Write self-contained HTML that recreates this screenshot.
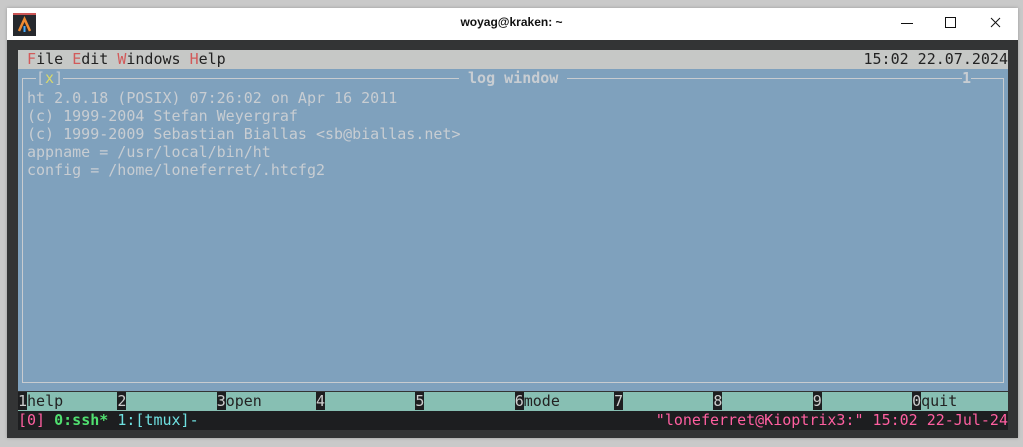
<!DOCTYPE html>
<html><head><meta charset="utf-8"><style>
body{margin:0;width:1023px;height:447px;background:#c9c9c9;position:relative;overflow:hidden;font-family:"DejaVu Sans Mono","Liberation Mono",monospace}
.win{position:absolute;left:7px;top:8px;width:1011px;height:430px;background:#333435;box-shadow:0 0 3px #999}
.tb{position:absolute;left:7px;top:8px;width:1011px;height:32px;background:#fff}
.title{position:absolute;left:0;width:1023px;top:15px;text-align:center;font:bold 12px "Liberation Sans",sans-serif;color:#111}
.row{position:absolute;left:18px;width:990px;height:19px;font-size:15px;line-height:19px;white-space:pre;letter-spacing:0}
.r{color:#d25a5a}
.t{position:absolute;font-size:15px;line-height:18px;white-space:pre;color:#c8cdd2}
</style></head><body>
<div class="win"></div>
<div class="tb"></div>
<div style="position:absolute;left:13px;top:13px;width:23px;height:21px;background:#26292e;border-top:2px solid #c55"></div>
<svg style="position:absolute;left:13px;top:14px" width="23" height="21"><path d="M6 17 L11.5 5 L17 17" stroke="#f08a30" stroke-width="2.5" fill="none"/><path d="M11.5 12 L11.5 18" stroke="#4af" stroke-width="2"/></svg>
<div class="title">woyag@kraken: ~</div>
<svg style="position:absolute;left:895px;top:14px" width="125" height="18"><path d="M6 9.5H18" stroke="#111"/><path d="M50.5 3.5h10v10h-10z" stroke="#111" fill="none"/><path d="M96 4l9 9M105 4l-9 9" stroke="#111"/></svg>
<div class="row" style="top:50px;background:#c6c8c6;color:#222"> <span class="r">F</span>ile <span class="r">E</span>dit <span class="r">W</span>indows <span class="r">H</span>elp<span style="position:absolute;right:0">15:02 22.07.2024</span></div>
<div style="position:absolute;left:18px;top:69px;width:990px;height:322px;background:#7fa1bd"></div>
<div style="position:absolute;left:22px;top:78px;width:980px;height:303px;border:1px solid #c8ccd0"></div>
<div class="t" style="left:36px;top:69px;background:#7fa1bd;color:#c8cdd2">[<span style="color:#d9d96a">x</span>]</div>
<div class="t" style="left:459px;top:69px;background:#7fa1bd;font-weight:bold"> log window </div>
<div class="t" style="left:962px;top:69px;background:#7fa1bd;font-weight:bold">1</div>
<div class="t" style="left:27px;top:89px">ht 2.0.18 (POSIX) 07:26:02 on Apr 16 2011
(c) 1999-2004 Stefan Weyergraf
(c) 1999-2009 Sebastian Biallas &lt;sb@biallas.net&gt;
appname = /usr/local/bin/ht
config = /home/loneferret/.htcfg2</div>
<div class="row" style="top:392px;background:#87bfb3;color:#222"><span style="background:#1d1e20;color:#ccc">1</span>help      <span style="background:#1d1e20;color:#ccc">2</span>          <span style="background:#1d1e20;color:#ccc">3</span>open      <span style="background:#1d1e20;color:#ccc">4</span>          <span style="background:#1d1e20;color:#ccc">5</span>          <span style="background:#1d1e20;color:#ccc">6</span>mode      <span style="background:#1d1e20;color:#ccc">7</span>          <span style="background:#1d1e20;color:#ccc">8</span>          <span style="background:#1d1e20;color:#ccc">9</span>          <span style="background:#1d1e20;color:#ccc">0</span>quit      </div>
<div class="row" style="top:411px;background:#1d1e20;color:#ff5fa0"><span>[0]</span> <b style="color:#50e070">0:ssh*</b> <span style="color:#6ee0e0">1:[tmux]-</span><span style="position:absolute;right:0">"loneferret@Kioptrix3:" 15:02 22-Jul-24</span></div>
</body></html>
